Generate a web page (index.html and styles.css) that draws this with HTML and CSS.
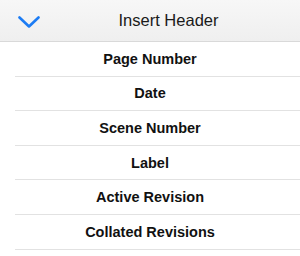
FILE: index.html
```html
<!DOCTYPE html>
<html lang="en">
	<head>
		<meta charset="UTF-8" />
		<meta name="viewport" content="width=device-width, initial-scale=1.0" />
		<title>Insert Header</title>
		<link rel="stylesheet" href="styles.css">
	</head>
	<body>
		<div class="header">
			<button class="back-btn" aria-label="Close">
				<svg width="22" height="12" viewBox="0 0 22 12">
					<polyline points="1.5,1.5 11,10.5 20.5,1.5" fill="none" stroke="#1c7cf4" stroke-width="2.6" stroke-linecap="round" stroke-linejoin="round" />
				</svg>
			</button>
			<div class="title">Insert Header</div>
		</div>

		<ul class="menu">
			<li class="menu-item">Page Number</li>
			<li class="menu-item">Date</li>
			<li class="menu-item">Scene Number</li>
			<li class="menu-item">Label</li>
			<li class="menu-item">Active Revision</li>
			<li class="menu-item">Collated Revisions</li>
		</ul>
	</body>
</html>
```

FILE: styles.css
```css
* {
	box-sizing: border-box;
	margin: 0;
	padding: 0;
}

body {
	font-family: 'Liberation Sans', Arial, sans-serif;
	width: 300px;
	height: 256px;
	background-color: #fff;
	color: #111;
	overflow: hidden;
}

/* Top bar */
.header {
	height: 42px;
	display: flex;
	align-items: center;
	justify-content: center;
	position: relative;
	padding-left: 37px;
	background: linear-gradient(to bottom, #f7f7f7, #efefef);
	border-bottom: 1px solid #d9d9d9;
}

.title {
	font-size: 16.5px;
	color: #1a1a1a;
	padding-bottom: 1px;
}

.back-btn {
	position: absolute;
	left: 18px;
	top: 16px;
	background: none;
	border: none;
	display: flex;
}

/* List */
.menu {
	list-style: none;
}

.menu-item {
	height: 34.6px;
	display: flex;
	align-items: center;
	justify-content: center;
	font-size: 14.5px;
	font-weight: 700;
	position: relative;
	padding-bottom: 1px;
}

.menu-item::after {
	content: '';
	position: absolute;
	left: 15px;
	right: 0;
	bottom: 0;
	height: 1px;
	background: #e2e2e2;
}
```
